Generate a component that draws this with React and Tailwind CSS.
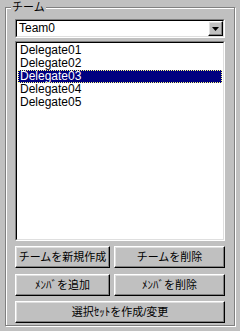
import React from "react";

const raised =
  "border border-t-white border-l-white border-r-black border-b-black shadow-[inset_-1px_-1px_0_#808080,inset_1px_1px_0_#dfdfdf]";

function Btn({ children, className = "" }) {
  return (
    <div
      className={`h-[22px] flex items-center justify-center bg-[#c0c0c0] text-black text-[11px] ${raised} ${className}`}
    >
      {children}
    </div>
  );
}

export default function App() {
  const items = ["Delegate01", "Delegate02", "Delegate03", "Delegate04", "Delegate05"];
  return (
    <div
      className="w-[240px] h-[331px] bg-[#c0c0c0] pt-[7px] pl-[5px] overflow-hidden"
      style={{ fontFamily: '"Liberation Sans", "Noto Sans CJK JP", sans-serif' }}
    >
      <div className="relative w-[230px] h-[319px] border border-[#808080] shadow-[inset_1px_1px_0_#fff,1px_1px_0_#fff] px-[9px] pt-[11px] flex flex-col">
        <div className="absolute -top-[8px] left-[5px] bg-[#c0c0c0] px-[1px] text-[11px] leading-[14px] text-black">
          チーム
        </div>
        {/* combo */}
        <div className="h-[19px] flex bg-white border border-t-[#808080] border-l-[#808080] border-r-white border-b-white">
          <div className="flex-1 flex border border-t-black border-l-black border-r-[#dfdfdf] border-b-[#dfdfdf]">
            <div className="flex-1 pl-[2px] text-[12px] leading-[15px] text-black">Team0</div>
            <div
              className={`w-[15px] h-full flex items-center justify-center bg-[#c0c0c0] ${raised}`}
            >
              <svg width="7" height="4" viewBox="0 0 7 4">
                <path d="M0 0H7L3.5 4Z" fill="#000" />
              </svg>
            </div>
          </div>
        </div>
        {/* list */}
        <div className="mt-[3px] h-[200px] bg-white border border-t-[#808080] border-l-[#808080] border-r-white border-b-white">
          <div className="h-full border border-t-black border-l-black border-r-[#dfdfdf] border-b-[#dfdfdf] pt-[1px] px-[1px]">
            {items.map((t, i) => (
              <div
                key={t}
                className={`h-[13px] pl-[2px] text-[12px] leading-[13px] ${
                  i === 2
                    ? "bg-[#000080] text-white outline-1 outline-dotted outline-[#ffff80] -outline-offset-1"
                    : "text-black"
                }`}
              >
                {t}
              </div>
            ))}
          </div>
        </div>
        <div className="mt-[5px] flex gap-[4px]">
          <Btn className="w-[95px]">チームを新規作成</Btn>
          <Btn className="flex-1">チームを削除</Btn>
        </div>
        <div className="mt-[6px] flex gap-[4px]">
          <Btn className="w-[95px]">ﾒﾝﾊﾞを追加</Btn>
          <Btn className="flex-1">ﾒﾝﾊﾞを削除</Btn>
        </div>
        <div className="mt-[5px]">
          <Btn>選択ｾｯﾄを作成/変更</Btn>
        </div>
      </div>
    </div>
  );
}
